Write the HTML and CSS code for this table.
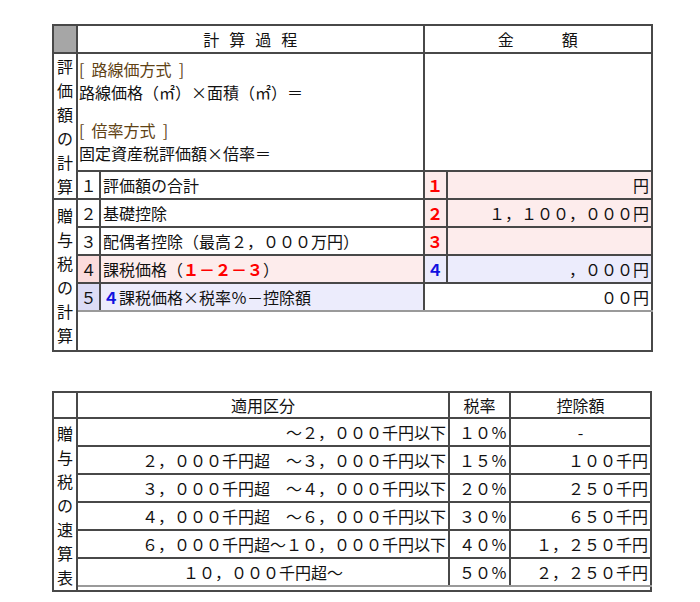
FILE: index.html
```html
<!DOCTYPE html>
<html lang="ja">
<head>
<meta charset="utf-8">
<title>贈与税の計算</title>
<link rel="stylesheet" href="styles.css">
</head>
<body>
<div class="page">
  <table class="calc">
    <colgroup>
      <col class="c-lab"><col class="c-num"><col class="c-txt"><col class="c-num"><col class="c-amt">
    </colgroup>
    <tr class="head">
      <td class="corner"></td>
      <td colspan="2" class="center"><span class="spaced">計算過程</span></td>
      <td colspan="2" class="center">金　　　額</td>
    </tr>
    <tr>
      <td rowspan="2" class="vlabel">評<br>価<br>額<br>の<br>計<br>算</td>
      <td colspan="2" class="formula">
        <div class="fblock"><span class="brown">[&nbsp;&nbsp;路線価方式&nbsp;&nbsp;]</span><br>路線価格（㎡）×面積（㎡）＝</div>
        <div class="fblock second"><span class="brown">[&nbsp;&nbsp;倍率方式&nbsp;&nbsp;]</span><br>固定資産税評価額×倍率＝</div>
      </td>
      <td colspan="2"></td>
    </tr>
    <tr>
      <td class="center">１</td>
      <td>評価額の合計</td>
      <td class="center pink red b">１</td>
      <td class="right pink">円</td>
    </tr>
    <tr>
      <td rowspan="5" class="vlabel">贈<br>与<br>税<br>の<br>計<br>算</td>
      <td class="center">２</td>
      <td>基礎控除</td>
      <td class="center pink red b">２</td>
      <td class="right pink">１，１００，０００円</td>
    </tr>
    <tr>
      <td class="center">３</td>
      <td>配偶者控除（最高２，０００万円）</td>
      <td class="center pink red b">３</td>
      <td class="right pink"></td>
    </tr>
    <tr>
      <td class="center pink-dark">４</td>
      <td class="pink">課税価格（<span class="red b">１－２－３</span>）</td>
      <td class="center lav blue b">４</td>
      <td class="right lav">，０００円</td>
    </tr>
    <tr class="last">
      <td class="center lav-dark">５</td>
      <td class="lav"><span class="blue b">４</span>課税価格×税率％－控除額</td>
      <td colspan="2" class="right">００円</td>
    </tr>
    <tr>
      <td colspan="4" class="blank"></td>
    </tr>
  </table>

  <table class="rates">
    <colgroup>
      <col class="r-lab"><col class="r-range"><col class="r-rate"><col class="r-ded">
    </colgroup>
    <tr class="head2">
      <td></td>
      <td class="center">適用区分</td>
      <td class="center">税率</td>
      <td class="center">控除額</td>
    </tr>
    <tr>
      <td rowspan="7" class="vlabel">贈<br>与<br>税<br>の<br>速<br>算<br>表</td>
      <td class="right">～２，０００千円以下</td>
      <td class="right">１０％</td>
      <td class="center">-</td>
    </tr>
    <tr>
      <td class="right">２，０００千円超　～３，０００千円以下</td>
      <td class="right">１５％</td>
      <td class="right">１００千円</td>
    </tr>
    <tr>
      <td class="right">３，０００千円超　～４，０００千円以下</td>
      <td class="right">２０％</td>
      <td class="right">２５０千円</td>
    </tr>
    <tr>
      <td class="right">４，０００千円超　～６，０００千円以下</td>
      <td class="right">３０％</td>
      <td class="right">６５０千円</td>
    </tr>
    <tr>
      <td class="right">６，０００千円超～１０，０００千円以下</td>
      <td class="right">４０％</td>
      <td class="right">１，２５０千円</td>
    </tr>
    <tr class="last">
      <td class="center">１０，０００千円超～</td>
      <td class="right">５０％</td>
      <td class="right">２，２５０千円</td>
    </tr>
    <tr>
      <td colspan="3" class="spacer"></td>
    </tr>
  </table>
</div>
</body>
</html>
```

FILE: styles.css
```css
body {
  margin: 0;
  background: #fff;
  color: #111;
  font-family: "Noto Sans CJK JP", sans-serif;
  font-size: 16px;
}

.page {
  padding: 24px 0 0 52px;
}

table {
  border-collapse: collapse;
  table-layout: fixed;
}

td {
  border: 2px solid #484848;
  padding: 0 2px;
  height: 26px;
  line-height: 26px;
  white-space: nowrap;
  vertical-align: middle;
}

.calc { width: 601px; }
.c-lab { width: 24px; }
.c-num { width: 23px; }
.c-txt { width: 323px; }
.c-amt { width: 205px; }

.rates {
  width: 600px;
  margin-top: 39px;
}
.r-lab { width: 24px; }
.r-range { width: 372px; }
.r-rate { width: 61px; }
.r-ded { width: 141px; }

.head2 td { height: 24px; line-height: 24px; }

.corner { background: #a6a6a6; }
.center { text-align: center; }
.right { text-align: right; }

.spaced {
  letter-spacing: 10px;
  margin-right: -10px;
}

.vlabel {
  text-align: center;
  line-height: 24px;
  padding: 0;
  vertical-align: middle;
}

.formula {
  padding: 4px 1px 4px;
  line-height: 23px;
  vertical-align: top;
}
.fblock.second { margin-top: 15px; }
.brown { color: #604214; }

.pink { background: #fdecec; }
.pink-dark { background: #fbdcdc; }
.lav { background: #ececfc; }
.lav-dark { background: #dcdcf6; }

.red { color: #f00; }
.blue { color: #1010e0; }
.b { font-weight: bold; }

.last td { border-bottom-color: #9a9a9a; }

.blank { height: 38px; }
.spacer { height: 3px; line-height: 3px; padding: 0; }
```
